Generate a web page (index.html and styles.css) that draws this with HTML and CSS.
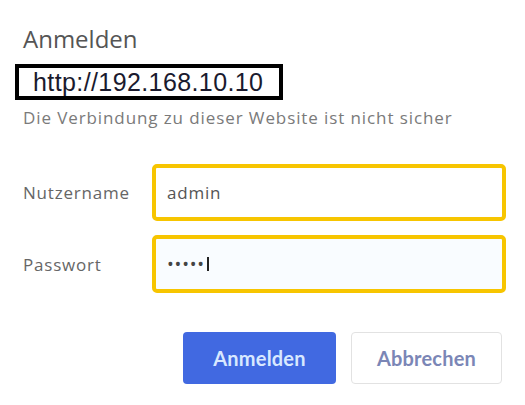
FILE: index.html
```html
<!DOCTYPE html>
<html lang="de">

<head>
    <meta charset="UTF-8">
    <meta name="viewport" content="width=device-width, initial-scale=1.0">
    <title>Anmelden</title>
    <link rel="stylesheet" href="styles.css">
</head>

<body>
    <div class="dialog">
        <h1 class="title">Anmelden</h1>
        <div class="url-box">http://192.168.10.10</div>
        <p class="notice">Die Verbindung zu dieser Website ist nicht sicher</p>

        <form class="login-form">
            <label class="field-label">Nutzername</label>
            <div class="field">admin</div>

            <label class="field-label">Passwort</label>
            <div class="field field-password">
                <span class="dots">&bull;&bull;&bull;&bull;&bull;</span><span class="caret"></span>
            </div>
        </form>

        <div class="actions">
            <button type="submit" class="btn btn-primary">Anmelden</button>
            <button type="button" class="btn btn-secondary">Abbrechen</button>
        </div>
    </div>
</body>

</html>
```

FILE: styles.css
```css
body {
    margin: 0;
    font-family: "Open Sans", Arial, sans-serif;
    background-color: #ffffff;
    color: #555555;
}

.dialog {
    padding: 24px 19px 0 15px;
}

.title {
    margin: 0 0 10px 8px;
    font-size: 24px;
    font-weight: 400;
    line-height: 30px;
    color: #555555;
}

.url-box {
    display: inline-block;
    box-sizing: border-box;
    width: 268px;
    height: 36px;
    padding-left: 14px;
    border: 4px solid #000000;
    font-family: "Liberation Sans", Arial, sans-serif;
    font-size: 25px;
    line-height: 28px;
    letter-spacing: 0.4px;
    color: #1a1a2e;
}

.notice {
    margin: 7px 0 0 8px;
    font-size: 17px;
    line-height: 22px;
    letter-spacing: 0.9px;
    color: #7a7a7a;
}

.login-form {
    display: grid;
    grid-template-columns: 137px 354px;
    row-gap: 14px;
    align-items: center;
    margin-top: 35px;
}

.field-label {
    padding-left: 8px;
    font-size: 17px;
    letter-spacing: 0.8px;
    color: #666666;
}

.field {
    box-sizing: border-box;
    height: 57px;
    padding-left: 11px;
    border: 4px solid #f7c500;
    border-radius: 5px;
    display: flex;
    align-items: center;
    font-size: 17px;
    letter-spacing: 0.8px;
    color: #555555;
    background-color: #ffffff;
}

.field-password {
    height: 58px;
    background-color: #f9fcff;
}

.dots {
    font-size: 18px;
    letter-spacing: 0.8px;
    color: #444444;
}

.caret {
    display: inline-block;
    width: 2px;
    height: 14px;
    margin-left: 2px;
    background-color: #222222;
}

.actions {
    display: flex;
    justify-content: flex-end;
    gap: 15px;
    margin-top: 39px;
    padding-right: 4px;
}

.btn {
    box-sizing: border-box;
    height: 52px;
    border-radius: 4px;
    font-family: Lato, "Open Sans", sans-serif;
    font-size: 20px;
    font-weight: 700;
    letter-spacing: 0.2px;
    cursor: pointer;
}

.btn-primary {
    width: 153px;
    border: none;
    background-color: #4169e1;
    color: #d8e8ff;
}

.btn-secondary {
    width: 151px;
    border: 1px solid #e2e2e2;
    background-color: #ffffff;
    color: #7b86b6;
}
```
